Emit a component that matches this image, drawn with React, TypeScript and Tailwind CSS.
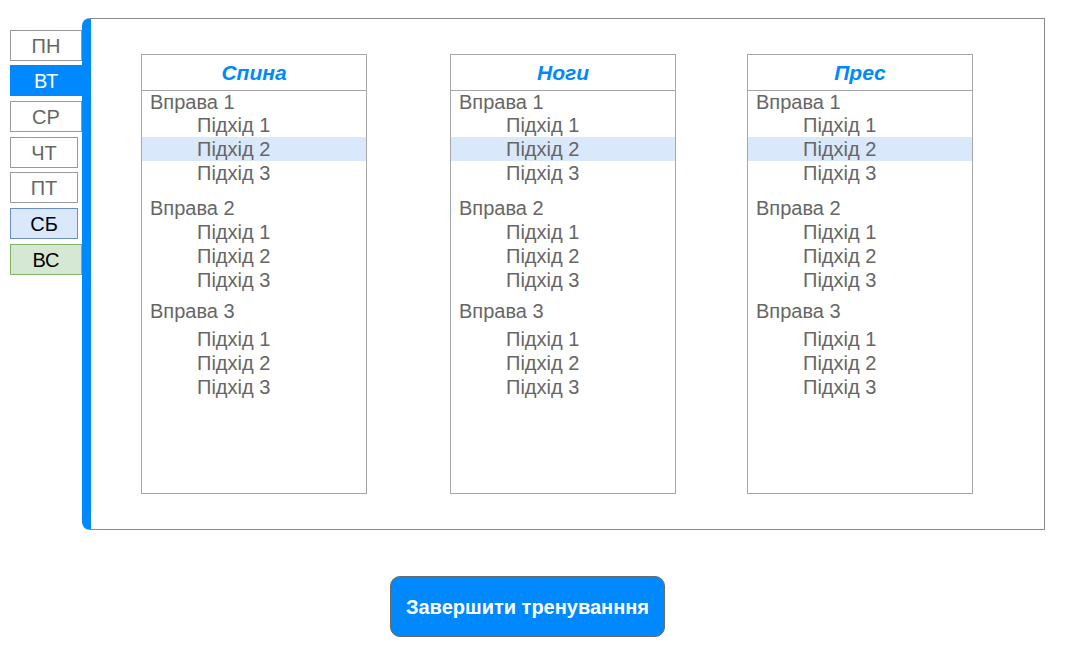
import React from "react";

const days = [
  { label: "ПН", cls: "w-[72px] bg-white border-[#9a9a9a] text-[#666666]" },
  { label: "ВТ", cls: "mt-[4px] w-[72px] bg-[#0088ff] border-[#0088ff] text-white" },
  { label: "СР", cls: "mt-[5px] w-[72px] bg-white border-[#9a9a9a] text-[#666666]" },
  { label: "ЧТ", cls: "mt-[5px] w-[68px] bg-white border-[#9a9a9a] text-[#666666]" },
  { label: "ПТ", cls: "mt-[4px] w-[68px] bg-white border-[#9a9a9a] text-[#666666]" },
  { label: "СБ", cls: "mt-[5px] w-[68px] bg-[#dae8fc] border-[#6c8ebf] text-black" },
  { label: "ВС", cls: "mt-[5px] w-[72px] bg-[#d5e8d4] border-[#82b366] text-black" },
];

function Row({ text, indent, hl, mt, first }: { text: string; indent?: boolean; hl?: boolean; mt?: string; first?: boolean }) {
  return (
    <div
      className={`${first ? "h-[22px] leading-[22px]" : "h-[24px] leading-[24px]"} text-[20px] text-[#666666] whitespace-nowrap ${
        indent ? "pl-[55px]" : "pl-[8px]"
      } ${hl ? "bg-[#dae8fc]" : ""} ${mt ?? ""}`}
    >
      {text}
    </div>
  );
}

function Column({ title, ml }: { title: string; ml: string }) {
  return (
    <div className={`w-[226px] h-[440px] border border-[#a6a6a6] flex flex-col ${ml}`}>
      <div className="h-[36px] border-b border-[#a6a6a6] flex items-center justify-center text-[21px] font-bold italic text-[#0088ff]">
        {title}
      </div>
      <Row text="Вправа 1" first />
      <Row text="Підхід 1" indent />
      <Row text="Підхід 2" indent hl />
      <Row text="Підхід 3" indent />
      <Row text="Вправа 2" mt="mt-[11px]" />
      <Row text="Підхід 1" indent />
      <Row text="Підхід 2" indent />
      <Row text="Підхід 3" indent />
      <Row text="Вправа 3" mt="mt-[7px]" />
      <Row text="Підхід 1" indent mt="mt-[4px]" />
      <Row text="Підхід 2" indent />
      <Row text="Підхід 3" indent />
    </div>
  );
}

export default function App() {
  return (
    <div className="w-[1065px] h-[647px] bg-white font-['Liberation_Sans',Arial,sans-serif] pt-[18px]">
      <div className="flex">
        <div className="ml-[10px] w-[72px] pt-[12px] flex flex-col">
          {days.map((d) => (
            <div
              key={d.label}
              className={`h-[31px] border flex items-center justify-center text-[20px] ${d.cls}`}
            >
              {d.label}
            </div>
          ))}
        </div>
        <div className="w-[963px] h-[512px] border border-[#8a8a8a] border-l-[9px] border-l-[#0088ff] rounded-l-[8px] pt-[35px] flex items-start">
          <Column title="Спина" ml="ml-[50px]" />
          <Column title="Ноги" ml="ml-[83px]" />
          <Column title="Прес" ml="ml-[71px]" />
        </div>
      </div>
      <div className="ml-[390px] mt-[46px] w-[275px] h-[61px] rounded-[10px] bg-[#0088ff] border border-[#6a6a6a] flex items-center justify-center text-white font-bold text-[20px]">
        Завершити тренуванння
      </div>
    </div>
  );
}
